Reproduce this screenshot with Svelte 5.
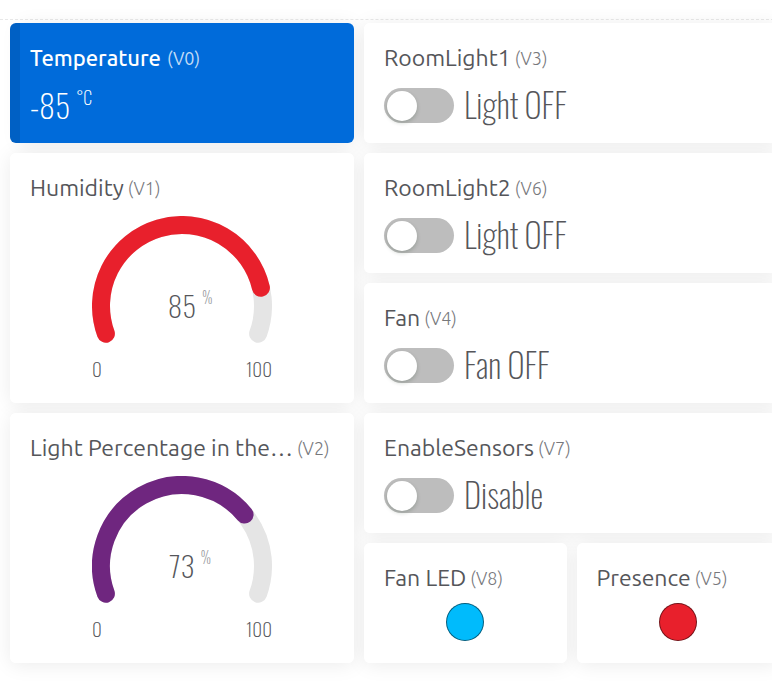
<script>
  const gauges = [
    { title: 'Humidity', pin: 'V1', value: 85, color: '#e8202c' },
    { title: 'Light Percentage in the…', pin: 'V2', value: 73, color: '#6f267f' }
  ];

  let switches = $state([
    { id: 'light1', title: 'RoomLight1', pin: 'V3', off: 'Light OFF', on: 'Light ON', checked: false },
    { id: 'light2', title: 'RoomLight2', pin: 'V6', off: 'Light OFF', on: 'Light ON', checked: false },
    { id: 'fan', title: 'Fan', pin: 'V4', off: 'Fan OFF', on: 'Fan ON', checked: false },
    { id: 'sensors', title: 'EnableSensors', pin: 'V7', off: 'Disable', on: 'Enable', checked: false }
  ]);

  const leds = [
    { title: 'Fan LED', pin: 'V8', color: '#00bbfc' },
    { title: 'Presence', pin: 'V5', color: '#e8202c' }
  ];

  // The dial sweeps 220 degrees around (90, 90), starting 20 degrees below the left end.
  function arc(percent) {
    const sweep = (220 * percent) / 100;
    const point = (deg) => {
      const a = (deg * Math.PI) / 180;
      return `${(90 + 81 * Math.cos(a)).toFixed(2)} ${(90 + 81 * Math.sin(a)).toFixed(2)}`;
    };
    return `M${point(160)} A81 81 0 ${sweep > 180 ? 1 : 0} 1 ${point(160 + sweep)}`;
  }
</script>

{#snippet heading(title, pin)}
  <h2><span class="name">{title}</span><small>({pin})</small></h2>
{/snippet}

<main>
  <div class="board">
    <div class="column readings">
      <section class="card primary">
        {@render heading('Temperature', 'V0')}
        <p class="reading">-85<sup>°C</sup></p>
      </section>
      {#each gauges as g}
        <section class="card tall">
          {@render heading(g.title, g.pin)}
          <div class="gauge">
            <svg viewBox="0 0 180 128" aria-hidden="true">
              <path d={arc(100)} stroke="#e5e5e5" />
              <path d={arc(g.value)} stroke={g.color} />
            </svg>
            <div class="value">{g.value}<sup>%</sup></div>
            <div class="scale"><span>0</span><span>100</span></div>
          </div>
        </section>
      {/each}
    </div>

    <div class="column controls">
      {#each switches as s}
        <section class="card">
          {@render heading(s.title, s.pin)}
          <div class="switch">
            <input type="checkbox" role="switch" id={s.id} bind:checked={s.checked} />
            <label for={s.id}>{s.checked ? s.on : s.off}</label>
          </div>
        </section>
      {/each}
      <div class="pair">
        {#each leds as led}
          <section class="card">
            {@render heading(led.title, led.pin)}
            <div class="led" style:background={led.color}></div>
          </section>
        {/each}
      </div>
    </div>
  </div>
</main>

<style>
  :global(body) {
    background: #fff;
  }
  main {
    padding-top: 19px;
    overflow: hidden;
    color: #55565a;
    font-family: Ubuntu, 'Noto Sans', sans-serif;
  }
  .board {
    display: grid;
    grid-template-columns: 344fr 415fr;
    gap: 10px;
    padding: 3px 0 20px 10px;
    margin-right: -7px;
    border-top: 1px dashed #e8e8e8;
    isolation: isolate;
  }
  .column {
    display: flex;
    flex-direction: column;
    gap: 10px;
    min-width: 0;
  }
  .pair {
    display: grid;
    grid-template-columns: 1fr 1fr;
    gap: 10px;
  }
  .card {
    position: relative;
    box-sizing: border-box;
    min-width: 0;
    min-height: 120px;
    padding: 20px 20px 0;
    border-radius: 6px;
    background: #fff;
  }
  .card::before {
    content: '';
    position: absolute;
    inset: 0;
    z-index: -1;
    border-radius: 6px;
    box-shadow: 0 2px 20px rgba(0, 0, 0, 0.08);
  }
  .tall {
    min-height: 250px;
  }
  .primary {
    background: #006bda;
    border-left: 10px solid #0060c4;
    padding-left: 10px;
    color: #fff;
  }
  h2 {
    display: flex;
    align-items: center;
    gap: 4px;
    margin: 0;
    font-size: 23px;
    line-height: 30px;
    font-weight: 400;
  }
  .primary h2 {
    gap: 6px;
    font-size: 22px;
    font-weight: 500;
  }
  .name {
    overflow: hidden;
    text-overflow: ellipsis;
    white-space: nowrap;
  }
  small {
    flex: none;
    font-size: 18px;
    font-weight: 300;
    color: #77787c;
  }
  .primary small {
    font-weight: 400;
    color: #c2dcf6;
  }
  .reading,
  .value,
  .scale,
  label {
    font-family: Oswald, 'Barlow Condensed', 'Roboto Condensed', 'Liberation Sans Narrow', Roboto, sans-serif;
    font-weight: 200;
  }
  .reading {
    display: flex;
    margin: 12px 0 0;
    font-size: 32px;
    line-height: 40px;
  }
  sup {
    margin-left: 6px;
    font-size: 18px;
    line-height: 24px;
    vertical-align: baseline;
  }
  .switch {
    display: flex;
    align-items: center;
    gap: 10px;
    margin-top: 12px;
    height: 40px;
  }
  input {
    appearance: none;
    box-sizing: border-box;
    flex: none;
    width: 70px;
    height: 35px;
    margin: 0;
    padding: 3px;
    border-radius: 18px;
    background: #bdbdbd;
    cursor: pointer;
  }
  input::before {
    content: '';
    display: block;
    width: 30px;
    height: 30px;
    border-radius: 50%;
    background: #fff;
    box-shadow: 0 2px 4px rgba(0, 35, 11, 0.2);
  }
  input:checked {
    background: #24c48e;
  }
  input:checked::before {
    margin-left: auto;
  }
  label {
    font-size: 33px;
    line-height: 40px;
    white-space: nowrap;
  }
  .gauge {
    position: relative;
    width: 180px;
    margin: 13px auto 0;
  }
  .gauge svg {
    display: block;
    width: 100%;
  }
  path {
    fill: none;
    stroke-width: 18;
    stroke-linecap: round;
  }
  .value {
    position: absolute;
    top: 71px;
    left: 50%;
    translate: -50% 0;
    font-size: 29px;
    line-height: 36px;
  }
  .value sup {
    position: absolute;
    left: 100%;
    top: -2px;
    font-size: 16px;
    color: #9a9ba0;
  }
  .scale {
    display: flex;
    justify-content: space-between;
    margin-top: 12px;
    font-size: 19px;
    line-height: 24px;
  }
  .led {
    box-sizing: border-box;
    width: 38px;
    height: 38px;
    margin: 10px auto 0;
    border: 1px solid rgba(0, 0, 0, 0.5);
    border-radius: 50%;
  }
</style>
